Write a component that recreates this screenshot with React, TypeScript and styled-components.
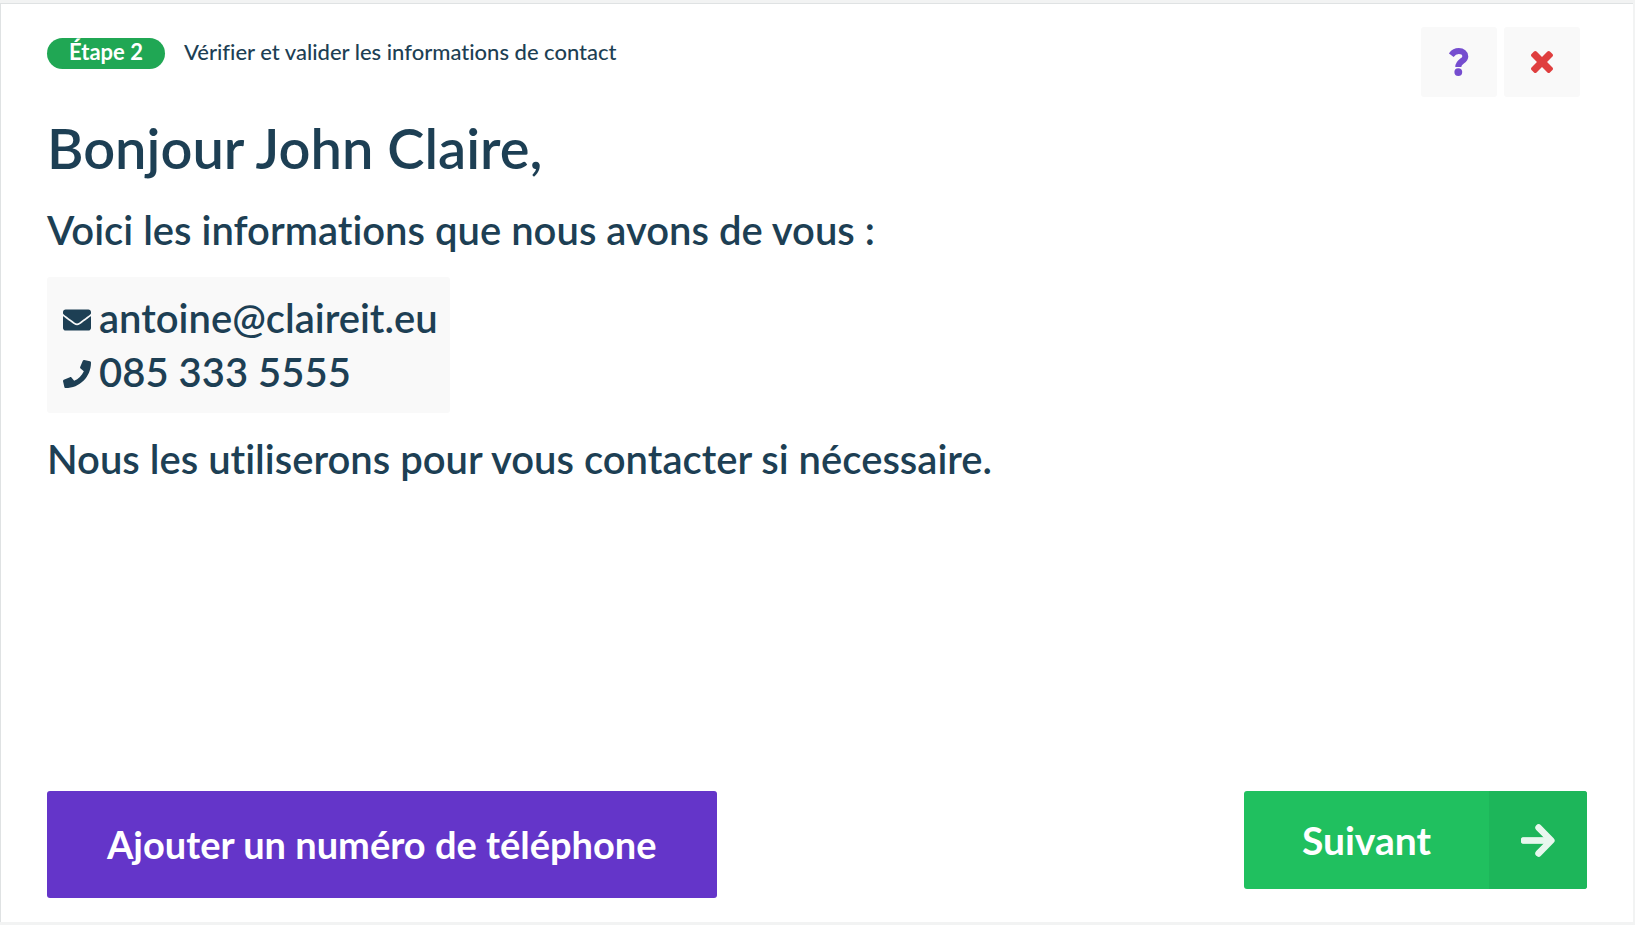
import React from "react";
import styled, { createGlobalStyle } from "styled-components";
import { FaEnvelope, FaPhone } from "react-icons/fa";

const GlobalStyle = createGlobalStyle`
  * { box-sizing: border-box; }
  body {
    margin: 0;
    background: #f2f3f3;
    color: #1d3f54;
    font-family: Lato, sans-serif;
    font-variant-ligatures: none;
  }
  h1, p { margin: 0; font-weight: 600; }
  button { border: 0; font-family: inherit; cursor: pointer; }
`;

const Card = styled.main`
  display: flex;
  flex-direction: column;
  min-height: calc(100vh - 6px);
  margin: 3px 2px 3px 0;
  padding: 23px 46px 24px;
  background: #fff;
  border: 1px solid #dfe2e3;
  border-right: 0;
  border-bottom: 0;
`;

const Header = styled.header`
  display: flex;
  justify-content: space-between;
  align-items: flex-start;
  padding-right: 7px;
`;

const Step = styled.div`
  display: flex;
  gap: 19px;
  padding-top: 11px;
`;

const Badge = styled.span`
  height: 31px;
  padding: 0 22px;
  border-radius: 16px;
  background: #20a754;
  color: #fff;
  font-size: 22px;
  font-weight: 700;
  line-height: 27px;
`;

const StepTitle = styled.p`
  font-size: 22px;
  font-weight: 500;
  line-height: 27px;
`;

const Tools = styled.div`
  display: flex;
  gap: 7px;
`;

const ToolButton = styled.button<{ $color: string }>`
  display: flex;
  align-items: center;
  justify-content: center;
  width: 76px;
  height: 70px;
  padding: 0;
  border-radius: 3px;
  background: #f9f9f9;
  color: ${(p) => p.$color};
`;

const QuestionMark = styled.svg`
  width: 20px;
  height: 28px;
`;

const Cross = styled.svg`
  width: 22px;
  height: 22px;
  fill: currentColor;
`;

const Greeting = styled.h1`
  margin-top: 15px;
  font-size: 56px;
  line-height: 72px;
`;

const Message = styled.p`
  font-size: 40px;
  line-height: 55px;
`;

const Body = styled.section`
  display: flex;
  flex-direction: column;
  align-items: flex-start;
  gap: 19px;
`;

const Contact = styled.ul`
  margin: 0;
  padding: 14px 12px 14px 16px;
  list-style: none;
  border-radius: 3px;
  background: #f9f9f9;
`;

const ContactItem = styled.li`
  display: flex;
  align-items: center;
  gap: 8px;
  font-size: 40px;
  font-weight: 600;
  line-height: 54px;
  svg { width: 28px; height: 28px; margin-top: 4px; }
`;

const Footer = styled.footer`
  display: flex;
  justify-content: space-between;
  align-items: flex-start;
  margin-top: auto;
`;

const AddButton = styled.button`
  padding: 0 60px;
  border-radius: 3px;
  background: #6435c9;
  color: #fff;
  font-size: 38px;
  font-weight: 700;
  line-height: 107px;
`;

const NextButton = styled.button`
  display: flex;
  padding: 0;
  overflow: hidden;
  border-radius: 3px;
  background: #20c05f;
  color: #fff;
  font-size: 39px;
  font-weight: 700;
  line-height: 98px;
`;

const NextLabel = styled.span`
  padding: 0 58px;
`;

const NextIcon = styled.span`
  display: flex;
  align-items: center;
  justify-content: center;
  width: 98px;
  background: #1db65a;
  color: #e8f7ee;
`;

const Arrow = styled.svg`
  width: 34px;
  height: 33px;
  fill: none;
  stroke: currentColor;
`;

export default function App() {
  return (
    <>
      <GlobalStyle />
      <Card>
        <Header>
          <Step>
            <Badge>Étape 2</Badge>
            <StepTitle>Vérifier et valider les informations de contact</StepTitle>
          </Step>
          <Tools>
            <ToolButton type="button" aria-label="Aide" $color="#754dcf">
              <QuestionMark viewBox="0 0 20 28" aria-hidden>
                <path d="M2.2 7.2C4.4 4.2 6.8 3.1 9.8 3.1C13.6 3.1 16.3 5.2 16.3 8.4C16.3 13.2 9.3 13 9.3 19" fill="none" stroke="currentColor" strokeWidth="6" />
                <circle cx="9.3" cy="24.1" r="3.9" fill="currentColor" />
              </QuestionMark>
            </ToolButton>
            <ToolButton type="button" aria-label="Fermer" $color="#df3e3e">
              <Cross viewBox="110 366 1188 1188" aria-hidden>
                <path d="M1298 1322q0 40-28 68l-136 136q-28 28-68 28t-68-28l-294-294-294 294q-28 28-68 28t-68-28l-136-136q-28-28-28-68t28-68l294-294-294-294q-28-28-28-68t28-68l136-136q28-28 68-28t68 28l294 294 294-294q28-28 68-28t68 28l136 136q28 28 28 68t-28 68l-294 294 294 294q28 28 28 68z" />
              </Cross>
            </ToolButton>
          </Tools>
        </Header>
        <Body>
          <Greeting>Bonjour John Claire,</Greeting>
          <Message>Voici les informations que nous avons de vous :</Message>
          <Contact>
            <ContactItem><FaEnvelope aria-hidden />antoine@claireit.eu</ContactItem>
            <ContactItem><FaPhone aria-hidden />085 333 5555</ContactItem>
          </Contact>
          <Message>Nous les utiliserons pour vous contacter si nécessaire.</Message>
        </Body>
        <Footer>
          <AddButton type="button">Ajouter un numéro de téléphone</AddButton>
          <NextButton type="button">
            <NextLabel>Suivant</NextLabel>
            <NextIcon>
              <Arrow viewBox="0 0 34 33" aria-hidden>
                <path d="M17.6 3.6L30.3 16.5L17.6 29.4" strokeWidth="6.6" strokeLinecap="round" strokeLinejoin="round" />
                <rect x="0.5" y="13.7" width="28" height="5.6" rx="1" fill="currentColor" strokeWidth="1" />
              </Arrow>
            </NextIcon>
          </NextButton>
        </Footer>
      </Card>
    </>
  );
}
